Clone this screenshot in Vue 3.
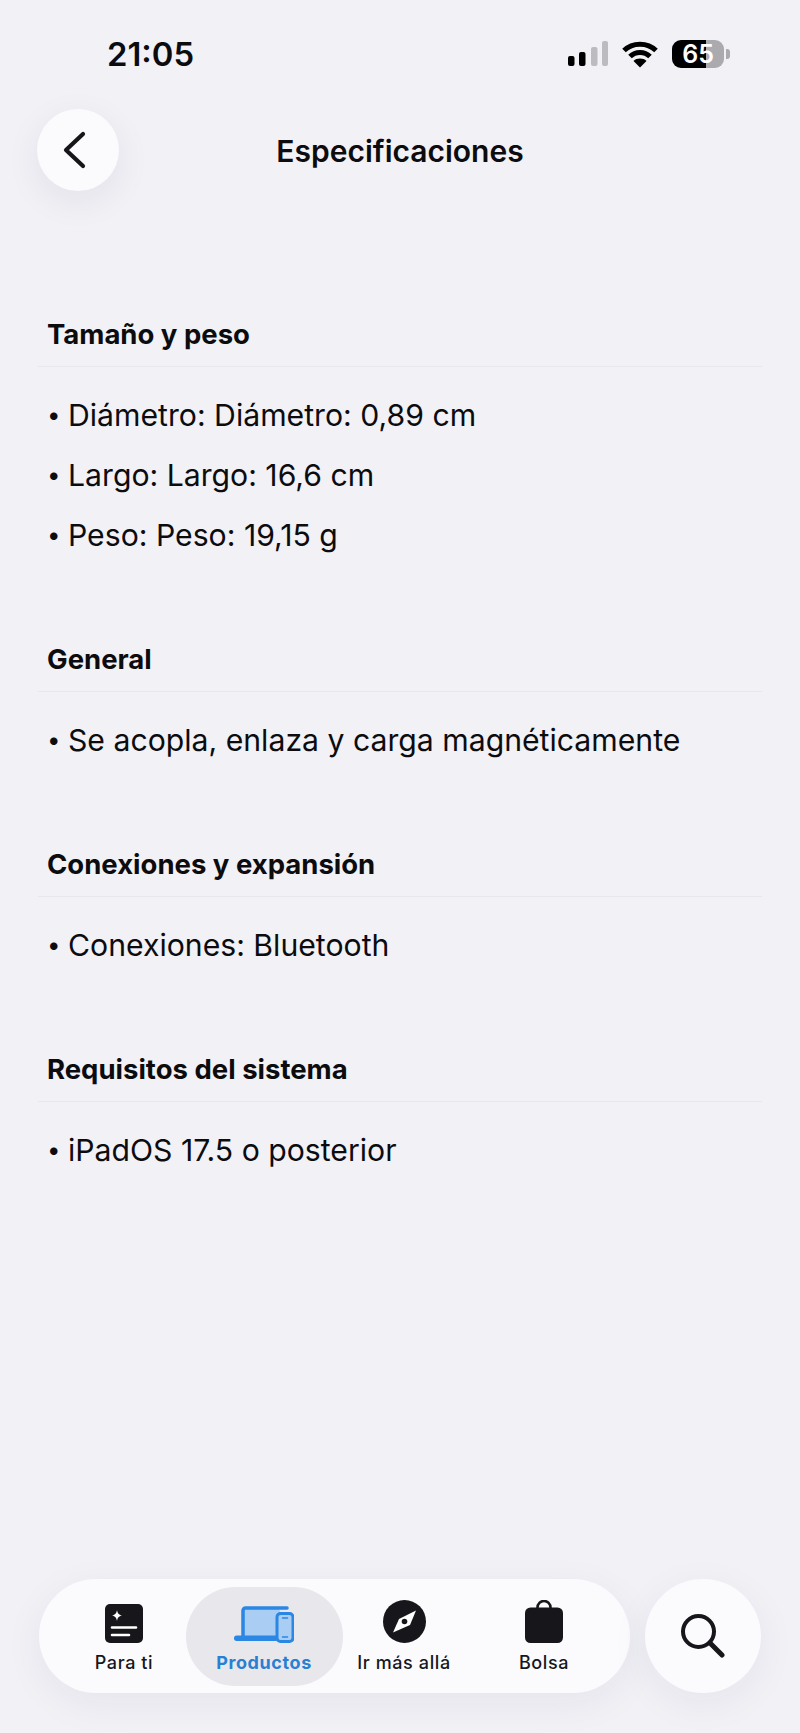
<script setup>
const sections = [
  {
    title: 'Tamaño y peso',
    items: ['Diámetro: Diámetro: 0,89 cm', 'Largo: Largo: 16,6 cm', 'Peso: Peso: 19,15 g'],
  },
  { title: 'General', items: ['Se acopla, enlaza y carga magnéticamente'] },
  { title: 'Conexiones y expansión', items: ['Conexiones: Bluetooth'] },
  { title: 'Requisitos del sistema', items: ['iPadOS 17.5 o posterior'] },
]

const tabs = [
  { value: 'foryou', label: 'Para ti' },
  { value: 'products', label: 'Productos' },
  { value: 'explore', label: 'Ir más allá' },
  { value: 'bag', label: 'Bolsa' },
]
</script>

<template>
  <div class="page">
    <div class="status-bar">
      <span class="time">21:05</span>
      <div class="status-icons">
        <svg class="signal" width="40" height="26" viewBox="0 0 40 26">
          <rect x="0" y="15" width="6.5" height="10" rx="2" fill="#000" />
          <rect x="11" y="11" width="6.5" height="14" rx="2" fill="#000" />
          <rect x="23" y="6" width="6.5" height="19" rx="2" fill="#bcbcc0" />
          <rect x="34" y="0" width="6" height="25" rx="2" fill="#bcbcc0" />
        </svg>
        <svg class="wifi" width="36" height="27" viewBox="0 0 36 27" fill="none" stroke="#000" stroke-width="5">
          <path d="M2 9.5C10.5 1 25.500 1 34 9.500" />
          <path d="M8 15.500C13.500 10 22.500 10 28 15.500" />
          <path d="M18 26.500l-6.500-6.500c3.500-3.200 9.500-3.200 13 0z" fill="#000" stroke="none" />
        </svg>
        <div class="battery"><span>65</span></div>
        <div class="battery-nub"></div>
      </div>
    </div>

    <header class="nav-header">
      <button type="button" class="back-button" aria-label="Atrás">
        <svg width="24" height="38" viewBox="0 0 24 38" fill="none" stroke="#16161a" stroke-width="4.200" stroke-linecap="round" stroke-linejoin="round">
          <path d="M21 3 4 19l17 16" />
        </svg>
      </button>
      <h1 class="nav-title">Especificaciones</h1>
    </header>

    <main class="content">
      <section v-for="section in sections" :key="section.title" class="spec-section">
        <h2 class="spec-title">{{ section.title }}</h2>
        <ul class="spec-list">
          <li v-for="item in section.items" :key="item" class="spec-item">
            <span class="bullet">•</span>{{ item }}
          </li>
        </ul>
      </section>
    </main>

    <nav class="bottom-row" aria-label="Principal">
      <div class="tab-bar">
        <button
          v-for="tab in tabs"
          :key="tab.value"
          type="button"
          class="tab-button"
          :class="{ active: tab.value === 'products' }"
        >
          <svg v-if="tab.value === 'foryou'" width="38" height="39" viewBox="0 0 38 39">
            <rect width="38" height="39" rx="5" fill="#17171b" />
            <path d="M12 6c.6 3.500 1.700 4.700 5 5.500-3.300.8-4.400 2-5 5.500-.6-3.500-1.700-4.700-5-5.500 3.300-.8 4.400-2 5-5.500z" fill="#fff" />
            <path d="M7 23.500h24M7 31h17" stroke="#fff" stroke-width="2.600" stroke-linecap="round" />
          </svg>
          <svg v-else-if="tab.value === 'products'" width="60" height="37" viewBox="0 0 60 37">
            <path d="M10 3h34a2 2 0 0 1 2 2v25H10z" fill="#a9cdf3" />
            <path d="M9 31V4.500A2.500 2.500 0 0 1 11.500 2H53" fill="none" stroke="#2a87e4" stroke-width="3.500" stroke-linecap="round" />
            <rect x="0" y="29.500" width="44" height="5.500" rx="2.700" fill="#2a87e4" />
            <rect x="43" y="7.500" width="16" height="28" rx="3.500" fill="#a9cdf3" stroke="#2a87e4" stroke-width="3" />
            <path d="M48.500 12h5M48.500 31h5" stroke="#2a87e4" stroke-width="1.500" stroke-linecap="round" />
          </svg>
          <svg v-else-if="tab.value === 'explore'" width="43" height="43" viewBox="0 0 43 43">
            <circle cx="21.500" cy="21.500" r="21.500" fill="#17171b" />
            <path d="M33 10.500 27 25 10 32.500l6-13.500z" fill="#fff" />
            <circle cx="21.500" cy="21.500" r="2.800" fill="#17171b" />
          </svg>
          <svg v-else width="38" height="43" viewBox="0 0 38 43">
            <path d="M12.500 9V7.500a6.500 6.500 0 0 1 13 0V9" fill="none" stroke="#17171b" stroke-width="2.600" />
            <rect x="0" y="7.500" width="38" height="35.500" rx="5.500" fill="#17171b" />
          </svg>
          <span class="tab-label">{{ tab.label }}</span>
        </button>
      </div>
      <button type="button" class="search-button" aria-label="Buscar">
        <svg width="44" height="44" viewBox="0 0 44 44" fill="none" stroke="#17171b" stroke-width="4" stroke-linecap="round">
          <circle cx="17.500" cy="17.500" r="15.500" />
          <path d="M29 29l12 12" stroke-width="5" />
        </svg>
      </button>
    </nav>
  </div>
</template>

<style>
body {
  background: #f1f1f6;
}
</style>

<style scoped>
.page {
  display: flex;
  flex-direction: column;
  min-height: 1733px;
  box-sizing: border-box;
  padding-bottom: 40px;
  color: #0c0c0f;
  background: #f1f1f6;
  font-family: Inter, 'Liberation Sans', sans-serif;
}

.status-bar {
  display: flex;
  align-items: center;
  justify-content: space-between;
  height: 54px;
  padding: 27px 70px 0 107px;
}

.time {
  font-size: 32.8px;
  font-weight: 600;
}

.status-icons {
  display: flex;
  align-items: center;
}

.signal {
  margin-right: 14px;
}

.wifi {
  margin-right: 14px;
}

.battery {
  display: flex;
  align-items: center;
  justify-content: center;
  width: 52px;
  height: 28px;
  border-radius: 9px;
  color: #fff;
  background: linear-gradient(to right, #000 65%, #ababaf 65%);
  font-size: 25px;
  font-weight: 600;
}

.battery-nub {
  width: 4px;
  height: 10px;
  margin-left: 2px;
  border-radius: 0 3px 3px 0;
  background: #ababaf;
}

.nav-header {
  display: grid;
  grid-template-columns: 82px 1fr 82px;
  align-items: center;
  margin-top: 28px;
  padding: 0 37px;
}

.back-button {
  display: flex;
  align-items: center;
  justify-content: center;
  width: 82px;
  height: 82px;
  padding: 0 8px 0 0;
  border: 0;
  border-radius: 50%;
  background: #fbfbfe;
  box-shadow: 0 10px 36px rgba(30, 30, 60, 0.07);
}

.nav-title {
  margin: 0;
  padding-top: 1px;
  font-size: 30px;
  font-weight: 600;
  text-align: center;
}

.content {
  flex: 1;
  display: flex;
  flex-direction: column;
  gap: 78px;
  margin-top: 127px;
  padding: 0 38px;
}

.spec-title {
  margin: 0;
  padding: 0 0 15px 9px;
  border-bottom: 1px solid #e8e8ec;
  font-size: 27.5px;
  font-weight: 700;
  line-height: 33px;
}

.spec-list {
  margin: 0;
  padding: 18px 0 0 9px;
  list-style: none;
}

.spec-item {
  display: flex;
  height: 60px;
  font-size: 30.2px;
  line-height: 60px;
}

.bullet {
  width: 21px;
  font-size: 24px;
}

.bottom-row {
  display: flex;
  gap: 15px;
  padding: 0 39px;
}

.tab-bar {
  display: grid;
  grid-template-columns: repeat(4, 140px);
  width: 591px;
  height: 114px;
  box-sizing: border-box;
  padding: 8px 16px 7px 15px;
  border-radius: 57px;
  background: #fbfbfe;
  box-shadow: 0 10px 40px rgba(30, 30, 60, 0.06);
}

.tab-button {
  display: flex;
  flex-direction: column;
  align-items: center;
  justify-content: flex-end;
  gap: 9px;
  height: 99px;
  padding: 0 0 12px;
  border: 0;
  border-radius: 50px;
  color: #17171b;
  background: transparent;
  font-family: inherit;
}

.tab-button.active {
  margin: 0 -8.5px;
  color: #2a7fd3;
  background: #e8e8ec;
}

.tab-label {
  font-size: 18px;
  font-weight: 500;
  letter-spacing: 0.6px;
  line-height: 22px;
  white-space: nowrap;
}

.active .tab-label {
  font-weight: 700;
}

.search-button {
  display: flex;
  align-items: center;
  justify-content: center;
  flex: none;
  width: 116px;
  height: 114px;
  padding: 0;
  border: 0;
  border-radius: 50%;
  background: #fbfbfe;
  box-shadow: 0 10px 40px rgba(30, 30, 60, 0.06);
}
</style>
